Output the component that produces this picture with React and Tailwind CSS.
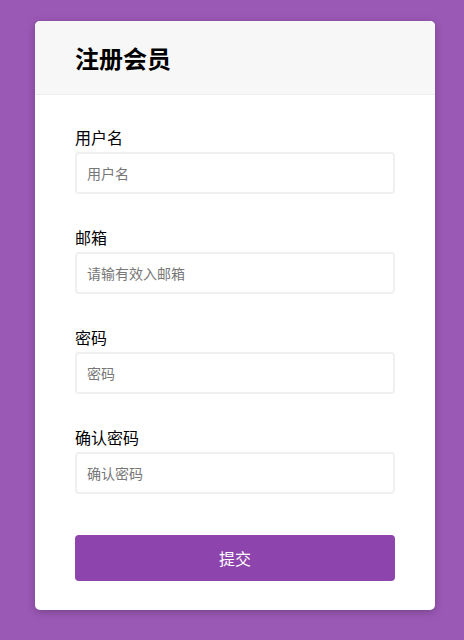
export default function App() {
  const fields = [
    { label: "用户名", placeholder: "用户名", type: "text" },
    { label: "邮箱", placeholder: "请输有效入邮箱", type: "email" },
    { label: "密码", placeholder: "密码", type: "password" },
    { label: "确认密码", placeholder: "确认密码", type: "password" },
  ];
  return (
    <div
      className="min-h-[640px] w-full bg-[#9b59b6] pt-[21px] pb-[30px]"
      style={{ fontFamily: '"Noto Sans CJK SC", "Noto Sans", sans-serif' }}
    >
      <div className="ml-[35px] w-[400px] overflow-hidden rounded-[5px] bg-white shadow-[0_2px_8px_rgba(0,0,0,0.25)]">
        <div className="flex h-[74px] items-center border-b border-[#eeeeee] bg-[#f7f7f7] px-10">
          <h2 className="text-[24px] font-bold leading-none text-black">注册会员</h2>
        </div>
        <form className="px-10 pt-[30px] pb-[29px]" onSubmit={(e) => e.preventDefault()}>
          {fields.map((f) => (
            <div key={f.label} className="mb-[31px] last:mb-0">
              <label className="mb-[3px] block text-[16px] leading-[24px] text-black">{f.label}</label>
              <input
                type={f.type}
                placeholder={f.placeholder}
                className="block h-[42px] w-full rounded-[4px] border-2 border-[#f0f0f0] px-[10px] text-[14px] text-black placeholder:text-[#777] outline-none"
              />
            </div>
          ))}
          <button
            type="submit"
            className="mt-[41px] block h-[46px] w-full rounded-[4px] bg-[#8e44ad] text-[16px] text-white"
          >
            提交
          </button>
        </form>
      </div>
    </div>
  );
}
